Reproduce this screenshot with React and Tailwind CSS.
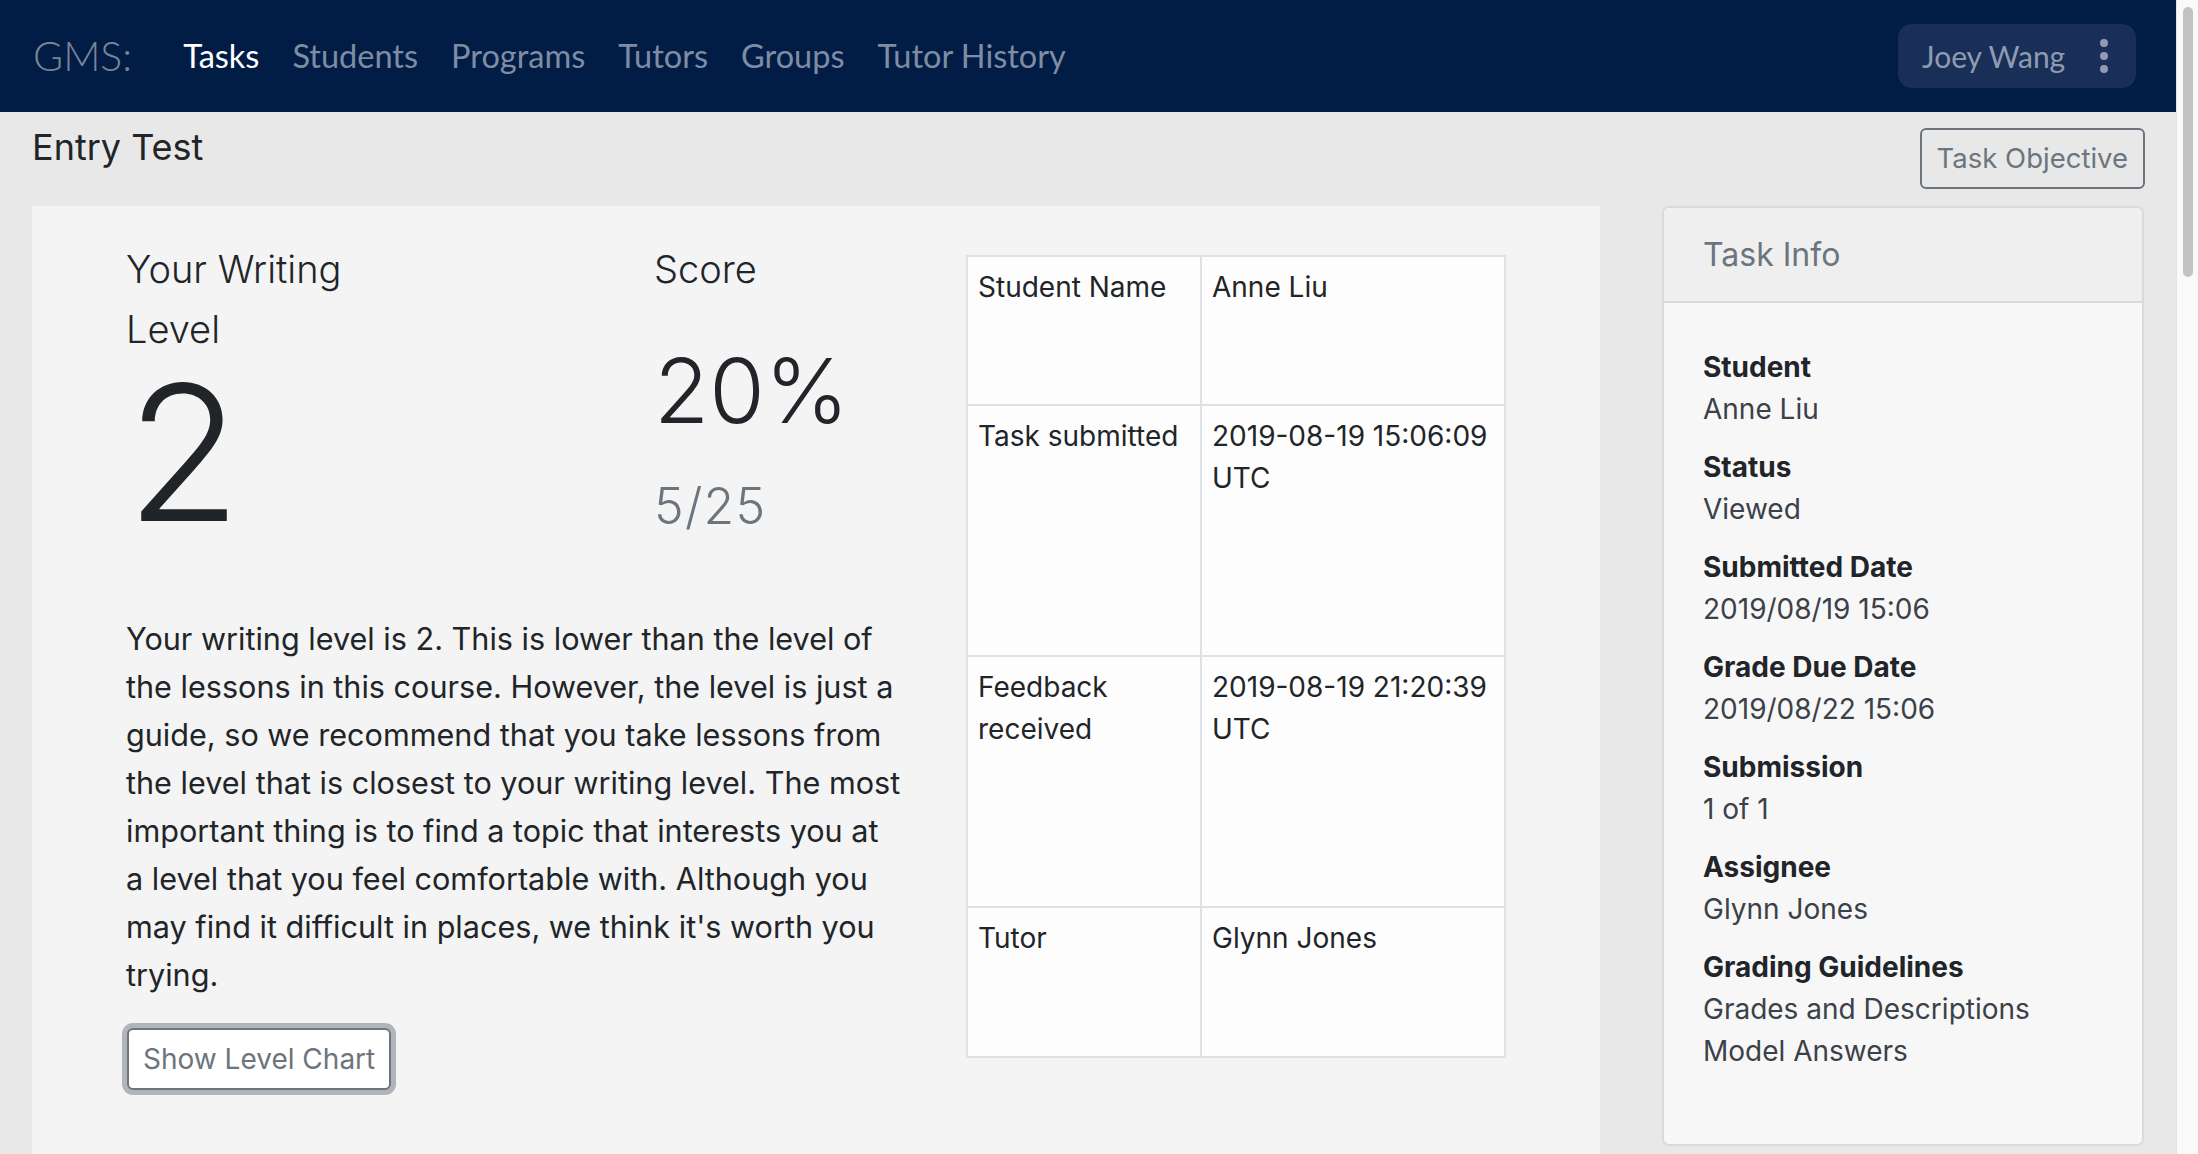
import React from "react";

const navLinks = ["Tasks", "Students", "Programs", "Tutors", "Groups", "Tutor History"];

const tableRows = [
  { label: "Student Name", value: "Anne Liu", h: "h-[149px]" },
  { label: "Task submitted", value: "2019-08-19 15:06:09 UTC", h: "h-[251px]" },
  { label: "Feedback received", value: "2019-08-19 21:20:39 UTC", h: "h-[251px]" },
  { label: "Tutor", value: "Glynn Jones", h: "h-[148px]" },
];

const taskInfo = [
  { label: "Student", values: ["Anne Liu"] },
  { label: "Status", values: ["Viewed"] },
  { label: "Submitted Date", values: ["2019/08/19 15:06"] },
  { label: "Grade Due Date", values: ["2019/08/22 15:06"] },
  { label: "Submission", values: ["1 of 1"] },
  { label: "Assignee", values: ["Glynn Jones"] },
  { label: "Grading Guidelines", values: ["Grades and Descriptions", "Model Answers"] },
];

// wrapped the same way the live page wraps it
const levelText = [
  "Your writing level is 2. This is lower than the level of",
  "the lessons in this course. However, the level is just a",
  "guide, so we recommend that you take lessons from",
  "the level that is closest to your writing level. The most",
  "important thing is to find a topic that interests you at",
  "a level that you feel comfortable with. Although you",
  "may find it difficult in places, we think it's worth you",
  "trying.",
];

function NavBar() {
  return (
    <div className="flex h-[112px] items-center bg-[#011d45] pl-[33px] pr-[40px] font-['Lato',sans-serif]">
      <div className="text-[41px] font-light text-[#7c8597]">GMS:</div>
      <div className="ml-[51px] flex items-center gap-[33px] text-[32.5px]">
        {navLinks.map((l, i) => (
          <span key={l} className={i === 0 ? "text-white" : "text-[#7f8ca3]"}>
            {l}
          </span>
        ))}
      </div>
      <div className="ml-auto flex h-[64px] w-[238px] items-center rounded-[14px] bg-[#1a2f57] pl-[24px] pr-[28px]">
        <span className="text-[30px] text-[#8f9bb2]">Joey Wang</span>
        <svg className="ml-auto" width="8" height="34" viewBox="0 0 8 34">
          <circle cx="4" cy="4" r="4" fill="#8f9bb2" />
          <circle cx="4" cy="17" r="4" fill="#8f9bb2" />
          <circle cx="4" cy="30" r="4" fill="#8f9bb2" />
        </svg>
      </div>
    </div>
  );
}

function ResultCard() {
  return (
    <div className="flex h-[1100px] w-[1568px] bg-[#f4f4f4] pl-[94px] pt-[33px]">
      <div className="w-[780px]">
        <div className="flex">
          <div className="w-[528px]">
            <div className="w-[260px] text-[38px] font-light leading-[60px] text-[#212529]">
              Your Writing Level
            </div>
            <div className="text-[188px] font-light leading-none text-[#212529]">2</div>
          </div>
          <div>
            <div className="text-[38px] font-light leading-[60px] text-[#212529]">Score</div>
            <div className="mt-[47px] text-[90px] font-light leading-none text-[#212529]">20%</div>
            <div className="mt-[45px] text-[50px] font-light leading-none tracking-wide text-[#6c757d]">
              5/25
            </div>
          </div>
        </div>
        <p className="mt-[68px] w-[820px] text-[30.6px] leading-[48px] text-[#212529]">
          {levelText.map((line, i) => (
            <React.Fragment key={i}>
              {line}
              {i < levelText.length - 1 && <br />}
            </React.Fragment>
          ))}
        </p>
        <button className="mt-[29px] ml-[1px] flex h-[62px] items-center rounded-[6px] border-2 border-[#6c757d] bg-white px-[14px] text-[28px] text-[#6c757d] ring-[5px] ring-[#b1b5ba]">
          Show Level Chart
        </button>
      </div>
      <div className="ml-[60px] mt-[16px] h-fit w-[540px] border-2 border-[#dee2e6] bg-[#fdfdfd] text-[28px] leading-[42px] text-[#212529]">
        {tableRows.map((r, i) => (
          <div
            key={r.label}
            className={`flex ${r.h} ${i < tableRows.length - 1 ? "border-b-2 border-[#dee2e6]" : ""}`}
          >
            <div className="w-[234px] border-r-2 border-[#dee2e6] px-[10px] pt-[9px]">{r.label}</div>
            <div className="flex-1 px-[10px] pt-[9px]">{r.value}</div>
          </div>
        ))}
      </div>
    </div>
  );
}

function TaskInfo() {
  return (
    <div className="h-fit w-[482px] overflow-hidden rounded-[7px] border-2 border-[#dadada] bg-[#f7f7f7]">
      <div className="flex h-[95px] items-center border-b-2 border-[#dadada] bg-[#efefef] px-[39px] text-[32px] text-[#6c757d]">
        Task Info
      </div>
      <div className="px-[39px] pt-[43px] pb-[56px] text-[28px] leading-[42px]">
        {taskInfo.map((t) => (
          <div key={t.label} className="mb-[16px]">
            <div className="font-bold text-[#212529]">{t.label}</div>
            {t.values.map((v) => (
              <div key={v} className="text-[#3b4148]">
                {v}
              </div>
            ))}
          </div>
        ))}
      </div>
    </div>
  );
}

export default function App() {
  return (
    <div className="flex h-[1154px] w-[2198px] overflow-hidden font-['Inter',sans-serif]">
      <div className="flex-1 overflow-hidden bg-[#e8e8e8]">
        <NavBar />
        <div className="px-[32px]">
          <div className="flex items-start justify-between pt-[14px]">
            <div className="text-[36px] leading-[43px] text-[#212529]">Entry Test</div>
            <button className="mt-[2px] mr-[-1px] flex h-[61px] items-center rounded-[6px] border-2 border-[#6c757d] px-[15px] text-[27.5px] text-[#6c757d]">
              Task Objective
            </button>
          </div>
          <div className="mt-[17px] flex items-start justify-between">
            <ResultCard />
            <TaskInfo />
          </div>
        </div>
      </div>
      <div className="w-[22px] border-l border-[#e4e4e4] bg-[#fafafa] px-[6px] pt-[7px]">
        <div className="h-[270px] w-[10px] rounded-full bg-[#c2c2c2]" />
      </div>
    </div>
  );
}
